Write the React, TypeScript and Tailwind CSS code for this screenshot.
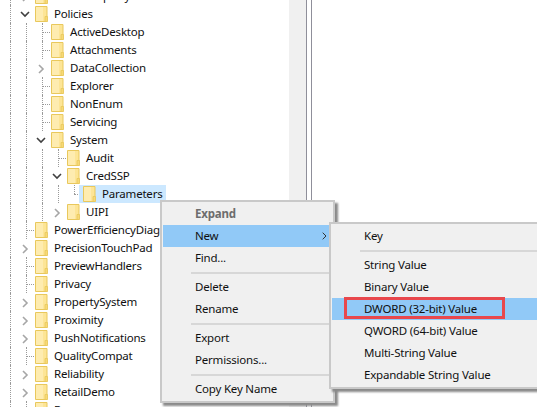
const FONT = "font-['Noto_Sans','Open_Sans',sans-serif]";

type RowState = "leaf" | "open" | "closed";

interface TreeRow {
  name: string;
  depth: number;
  state: RowState;
  selected?: boolean;
}

const rows: TreeRow[] = [
  { name: "PhotoPropertyHandler", depth: 0, state: "closed" },
  { name: "Policies", depth: 0, state: "open" },
  { name: "ActiveDesktop", depth: 1, state: "leaf" },
  { name: "Attachments", depth: 1, state: "leaf" },
  { name: "DataCollection", depth: 1, state: "closed" },
  { name: "Explorer", depth: 1, state: "leaf" },
  { name: "NonEnum", depth: 1, state: "leaf" },
  { name: "Servicing", depth: 1, state: "leaf" },
  { name: "System", depth: 1, state: "open" },
  { name: "Audit", depth: 2, state: "leaf" },
  { name: "CredSSP", depth: 2, state: "open" },
  { name: "Parameters", depth: 3, state: "leaf", selected: true },
  { name: "UIPI", depth: 2, state: "closed" },
  { name: "PowerEfficiencyDiagnostics", depth: 0, state: "leaf" },
  { name: "PrecisionTouchPad", depth: 0, state: "closed" },
  { name: "PreviewHandlers", depth: 0, state: "leaf" },
  { name: "Privacy", depth: 0, state: "leaf" },
  { name: "PropertySystem", depth: 0, state: "closed" },
  { name: "Proximity", depth: 0, state: "closed" },
  { name: "PushNotifications", depth: 0, state: "closed" },
  { name: "QualityCompat", depth: 0, state: "leaf" },
  { name: "Reliability", depth: 0, state: "closed" },
  { name: "RetailDemo", depth: 0, state: "closed" },
  { name: "Run", depth: 0, state: "leaf" },
];

function Folder() {
  return (
    <svg width="13" height="16" viewBox="0 0 13 16" className="shrink-0">
      <path d="M.5.5h11.5v15H.5z" fill="#fde596" stroke="#e9c85c" />
      <path d="M1 1h7v14H1z" fill="#feecb0" />
      <path d="M10 10.5h2.5v5H10z" fill="#f7d976" stroke="#e9c85c" strokeWidth=".8" />
    </svg>
  );
}

function Chevron({ open }: { open: boolean }) {
  if (open) {
    return (
      <svg width="10" height="7" viewBox="0 0 10 7" className="absolute left-[1px] top-[6px]">
        <path d="M1 1l4 4 4-4" fill="none" stroke="#404040" strokeWidth="1.6" />
      </svg>
    );
  }
  return (
    <svg width="7" height="10" viewBox="0 0 7 10" className="absolute left-[3px] top-[5px]">
      <path d="M1 1l4 4-4 4" fill="none" stroke="#a6a6a6" strokeWidth="1.6" />
    </svg>
  );
}

function Row({ row }: { row: TreeRow }) {
  const guides = [10, 26];
  if (row.depth >= 1) guides.push(42);
  if (row.depth >= 2) guides.push(58);
  const lastGuide = 26 + row.depth * 16;

  return (
    <div className="relative flex h-[18px] items-center" style={{ paddingLeft: 19 + row.depth * 16 }}>
      {guides.map((x) => (
        <span
          key={x}
          className="absolute top-0 bottom-0 border-l border-dotted border-[#9a9a9a]"
          style={{ left: x }}
        />
      ))}
      {row.depth === 3 && (
        <span className="absolute top-0 h-[9px] left-[74px] border-l border-dotted border-[#9a9a9a]" />
      )}
      {row.state === "leaf" ? (
        <span
          className="absolute top-[9px] w-[8px] border-t border-dotted border-[#9a9a9a]"
          style={{ left: lastGuide }}
        />
      ) : null}
      <div className="relative h-[18px] w-4 shrink-0">
        {row.state !== "leaf" && (
          <span className="absolute left-0 top-0 h-[18px] w-3 bg-white">
            <Chevron open={row.state === "open"} />
          </span>
        )}
      </div>
      <div className={`relative -ml-1 flex h-[18px] items-center pl-1 pr-[3px] ${row.selected ? "bg-[#cce8ff]" : ""}`}>
        <Folder />
        <span className="ml-[6px] whitespace-nowrap text-[11.5px] leading-[18px] tracking-[-0.2px] text-[#101010]">{row.name}</span>
      </div>
    </div>
  );
}

function MenuItem({ label, active, disabled, arrow, inset }: { label: string; active?: boolean; disabled?: boolean; arrow?: boolean; inset: string }) {
  return (
    <div className={`relative flex h-[22px] items-center text-[11.5px] leading-[16px] tracking-[-0.2px] ${inset} ${active ? "bg-[#91c9f7]" : ""}`}>
      <span className={disabled ? "font-bold text-[#6d6d6d]" : "text-[#101010]"}>{label}</span>
      {arrow && (
        <svg width="5" height="8" viewBox="0 0 5 8" className="absolute right-[5px] top-[7px]">
          <path d="M.7.7L4 4 .7 7.3" fill="none" stroke="#333" strokeWidth="1" />
        </svg>
      )}
    </div>
  );
}

function Separator({ left }: { left: string }) {
  return <div className={`mt-[3px] mb-[2px] h-[2px] bg-[#d7d7d7] ${left}`} />;
}

export default function App() {
  return (
    <div className={`relative flex h-[407px] w-[537px] overflow-hidden bg-white ${FONT}`}>
      <div className="h-full w-[289px] shrink-0 overflow-hidden">
        <div className="-mt-[13px]">
          {rows.map((r) => (
            <Row key={r.name} row={r} />
          ))}
        </div>
      </div>
      <div className="h-full w-[17px] shrink-0 bg-[#f0f0f0]" />
      <div className="h-full w-[6px] shrink-0 border-x border-[#8f8f9a] bg-white" />

      {/* context menu */}
      <div className="absolute left-[160px] top-[200px] w-[175px] border-2 border-[#c9c9c9] bg-[#f0f0f0] p-px shadow-[3px_3px_2px_#8a8a8a]">
        <MenuItem label="Expand" disabled inset="pl-[32px]" />
        <MenuItem label="New" active arrow inset="pl-[32px]" />
        <MenuItem label="Find..." inset="pl-[32px]" />
        <Separator left="ml-[28px]" />
        <MenuItem label="Delete" inset="pl-[32px]" />
        <MenuItem label="Rename" inset="pl-[32px]" />
        <Separator left="ml-[28px]" />
        <MenuItem label="Export" inset="pl-[32px]" />
        <MenuItem label="Permissions..." inset="pl-[32px]" />
        <Separator left="ml-[28px]" />
        <MenuItem label="Copy Key Name" inset="pl-[32px]" />
      </div>

      {/* New submenu */}
      <div className="absolute left-[329px] top-[222px] w-[230px] border-2 border-[#c9c9c9] bg-[#f0f0f0] p-px shadow-[3px_3px_2px_#8a8a8a]">
        <MenuItem label="Key" inset="pl-[32px]" />
        <Separator left="ml-[28px]" />
        <MenuItem label="String Value" inset="pl-[32px]" />
        <MenuItem label="Binary Value" inset="pl-[32px]" />
        <div className="relative">
          <MenuItem label="DWORD (32-bit) Value" active inset="pl-[32px]" />
          <span className="absolute left-[12px] top-[-1px] h-[22px] w-[161px] border-[3px] border-[#e8474c]" />
        </div>
        <MenuItem label="QWORD (64-bit) Value" inset="pl-[32px]" />
        <MenuItem label="Multi-String Value" inset="pl-[32px]" />
        <MenuItem label="Expandable String Value" inset="pl-[32px]" />
      </div>
    </div>
  );
}
